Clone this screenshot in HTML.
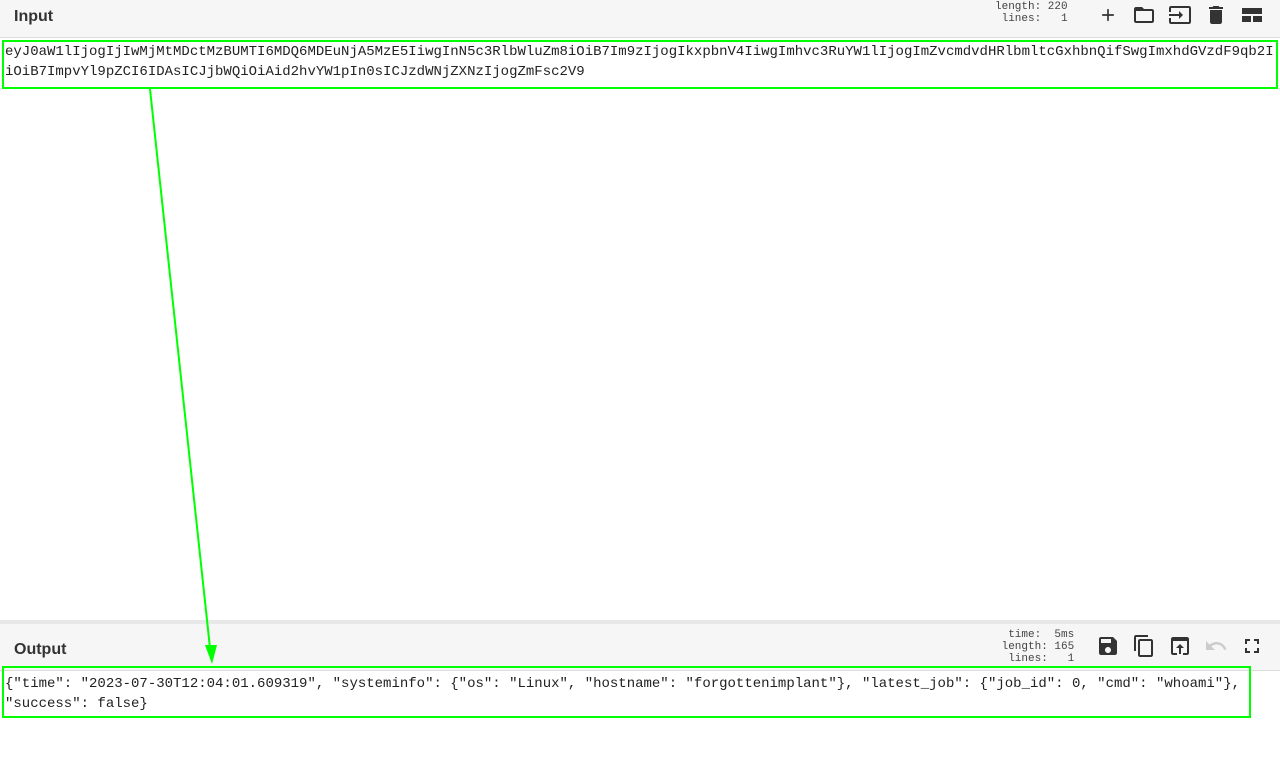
<!DOCTYPE html>
<html><head><style>
body{margin:0;width:1280px;height:762px;background:#fff;font-family:"Liberation Sans",sans-serif;position:relative;overflow:hidden}
.hdr{position:absolute;left:0;width:1280px;background:#f6f6f6;border-bottom:1px solid #ddd}
.title{position:absolute;left:14px;font-size:16px;font-weight:bold;color:#333}
.stats{position:absolute;font-family:"Liberation Mono",monospace;font-size:11px;line-height:12px;color:#444;white-space:pre;text-align:right}
.txt{position:absolute;font-family:"Liberation Mono",monospace;font-size:14px;line-height:20px;color:#222;white-space:pre}
.box{position:absolute;border:2px solid #00ff00;box-sizing:border-box}
svg.i{position:absolute}
</style></head><body>
<div class="hdr" style="top:0;height:37px"></div>
<div class="title" style="top:8px">Input</div>
<div class="stats" style="left:995px;top:1px">length: 220
 lines:   1</div>
<svg class="i" style="left:1098px;top:5px" width="20" height="20" viewBox="0 0 24 24"><path d="M19 13h-6v6h-2v-6H5v-2h6V5h2v6h6z" fill="#333"/></svg>
<svg class="i" style="left:1132px;top:3px" width="24" height="24" viewBox="0 0 24 24"><path d="M20 6h-8l-2-2H4c-1.1 0-2 .9-2 2v12c0 1.1.9 2 2 2h16c1.1 0 2-.9 2-2V8c0-1.1-.9-2-2-2zm0 12H4V8h16v10z" fill="#333"/></svg>
<svg class="i" style="left:1168px;top:3px" width="24" height="24" viewBox="0 0 24 24"><path d="M21 3H3c-1.1 0-2 .9-2 2v4h2V5h18v14H3v-4H1v4c0 1.1.9 2 2 2h18c1.1 0 2-.9 2-2V5c0-1.1-.9-2-2-2zM11 16l4-4-4-4v3H1v2h10v3z" fill="#333"/></svg>
<svg class="i" style="left:1204px;top:3px" width="24" height="24" viewBox="0 0 24 24"><path d="M6 19c0 1.1.9 2 2 2h8c1.1 0 2-.9 2-2V7H6v12zM19 4h-3.5l-1-1h-5l-1 1H5v2h14V4z" fill="#333"/></svg>
<svg class="i" style="left:1240px;top:3px" width="24" height="24" viewBox="0 0 24 24"><path d="M2 5h20v6H2zM2 13h9v6H2zM13 13h9v6h-9z" fill="#333"/></svg>

<div class="txt" style="left:5px;top:42px">eyJ0aW1lIjogIjIwMjMtMDctMzBUMTI6MDQ6MDEuNjA5MzE5IiwgInN5c3RlbWluZm8iOiB7Im9zIjogIkxpbnV4IiwgImhvc3RuYW1lIjogImZvcmdvdHRlbmltcGxhbnQifSwgImxhdGVzdF9qb2I
iOiB7ImpvYl9pZCI6IDAsICJjbWQiOiAid2hvYW1pIn0sICJzdWNjZXNzIjogZmFsc2V9</div>
<div class="box" style="left:2px;top:40px;width:1276px;height:49px"></div>

<div style="position:absolute;left:0;top:620px;width:1280px;height:4px;background:#e8e8e8"></div>
<div class="hdr" style="top:624px;height:46px"></div>
<div class="title" style="top:641px">Output</div>
<div class="stats" style="left:995px;top:629px">  time:  5ms
length: 165
 lines:   1</div>
<svg class="i" style="left:1096px;top:634px" width="24" height="24" viewBox="0 0 24 24"><path d="M17 3H5c-1.11 0-2 .9-2 2v14c0 1.1.89 2 2 2h14c1.1 0 2-.9 2-2V7l-4-4zm-5 16c-1.66 0-3-1.34-3-3s1.34-3 3-3 3 1.34 3 3-1.34 3-3 3zm3-10H5V5h10v4z" fill="#333"/></svg>
<svg class="i" style="left:1132px;top:634px" width="24" height="24" viewBox="0 0 24 24"><path d="M16 1H4c-1.1 0-2 .9-2 2v14h2V3h12V1zm3 4H8c-1.1 0-2 .9-2 2v14c0 1.1.9 2 2 2h11c1.1 0 2-.9 2-2V7c0-1.1-.9-2-2-2zm0 16H8V7h11v14z" fill="#333"/></svg>
<svg class="i" style="left:1168px;top:634px" width="24" height="24" viewBox="0 0 24 24"><path d="M19 3H5c-1.1 0-2 .9-2 2v14c0 1.1.9 2 2 2h4v-2H5V7h14v12h-4v2h4c1.1 0 2-.9 2-2V5c0-1.1-.9-2-2-2zm-7 7l-4 4h3v6h2v-6h3l-4-4z" fill="#333"/></svg>
<svg class="i" style="left:1204px;top:634px" width="24" height="24" viewBox="0 0 24 24"><path d="M12.5 8c-2.65 0-5.05.99-6.9 2.6L2 7v9h9l-3.62-3.62c1.39-1.16 3.16-1.88 5.12-1.88 3.54 0 6.55 2.31 7.6 5.5l2.37-.78C21.08 11.03 17.15 8 12.5 8z" fill="#ccc"/></svg>
<svg class="i" style="left:1240px;top:634px" width="24" height="24" viewBox="0 0 24 24"><path d="M7 14H5v5h5v-2H7v-3zm-2-4h2V7h3V5H5v5zm12 7h-3v2h5v-5h-2v3zM14 5v2h3v3h2V5h-5z" fill="#333"/></svg>

<div class="txt" style="left:5px;top:674px">{"time": "2023-07-30T12:04:01.609319", "systeminfo": {"os": "Linux", "hostname": "forgottenimplant"}, "latest_job": {"job_id": 0, "cmd": "whoami"},
"success": false}</div>
<div class="box" style="left:2px;top:666px;width:1249px;height:52px"></div>

<svg style="position:absolute;left:0;top:0" width="1280" height="762"><line x1="150" y1="89" x2="210" y2="648" stroke="#00ff00" stroke-width="2"/><polygon points="205,645 217,645 212,664" fill="#00ff00"/></svg>
</body></html>
